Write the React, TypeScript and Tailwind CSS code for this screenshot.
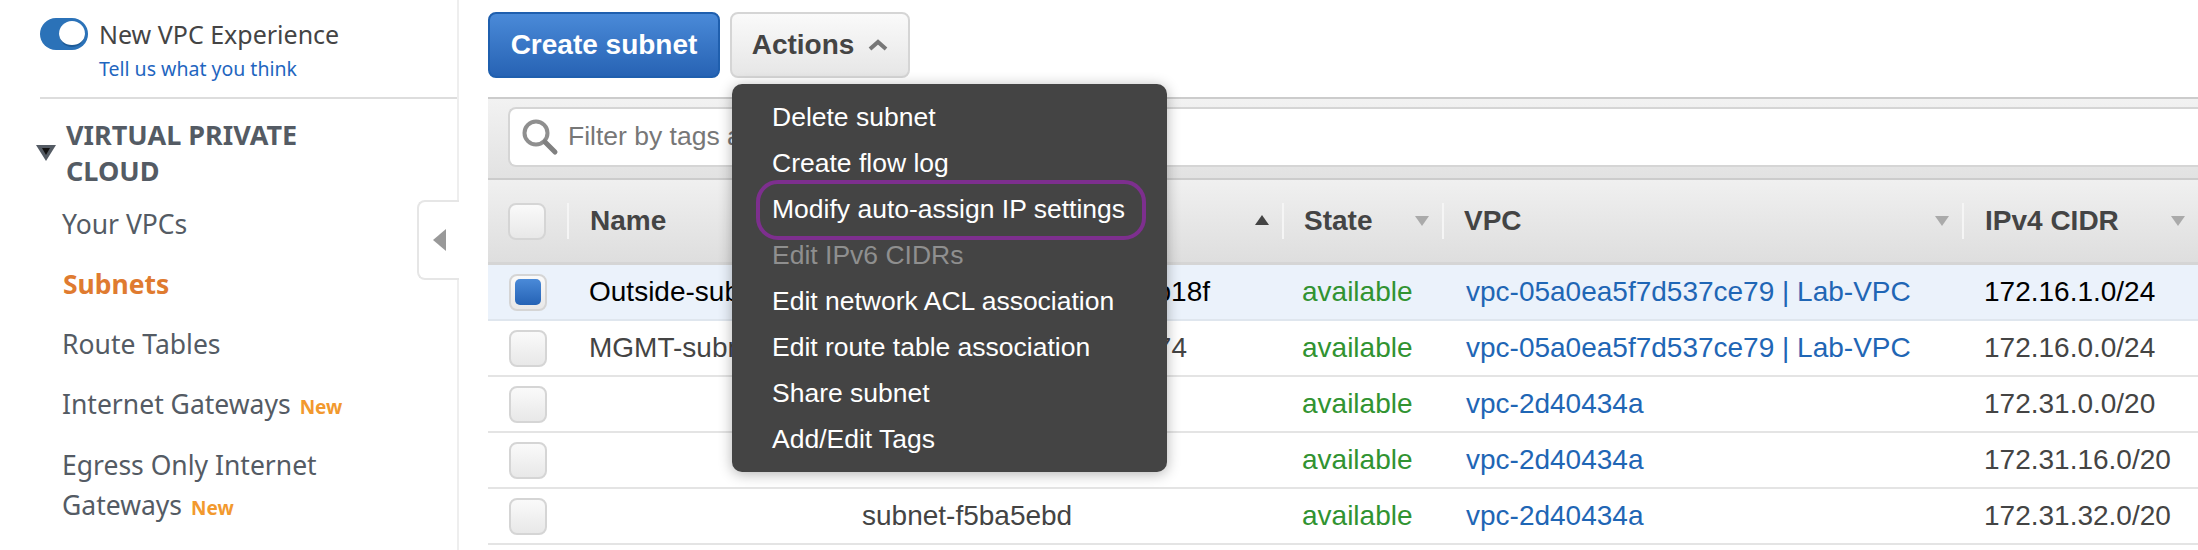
const menuItems = [
  { label: "Delete subnet" },
  { label: "Create flow log" },
  { label: "Modify auto-assign IP settings", highlighted: true },
  { label: "Edit IPv6 CIDRs", disabled: true },
  { label: "Edit network ACL association" },
  { label: "Edit route table association" },
  { label: "Share subnet" },
  { label: "Add/Edit Tags" },
];

const rows = [
  { name: "Outside-subnet", id: "b18f", idRight: true, vpc: "vpc-05a0ea5f7d537ce79 | Lab-VPC", cidr: "172.16.1.0/24", selected: true },
  { name: "MGMT-subnet", id: "74", idRight: true, vpc: "vpc-05a0ea5f7d537ce79 | Lab-VPC", cidr: "172.16.0.0/24" },
  { name: "", id: "", vpc: "vpc-2d40434a", cidr: "172.31.0.0/20" },
  { name: "", id: "", vpc: "vpc-2d40434a", cidr: "172.31.16.0/20" },
  { name: "", id: "subnet-f5ba5ebd", vpc: "vpc-2d40434a", cidr: "172.31.32.0/20" },
];

function NewBadge() {
  return <span className="ml-[9px] text-[19px] font-bold text-[#f2992e]">New</span>;
}

function Sidebar() {
  return (
    <aside className="relative h-full w-[459px] shrink-0 border-r-2 border-[#eeeeee] pl-[40px] font-['Noto_Sans',sans-serif]">
      <div className="h-[99px] border-b-2 border-[#dddddd] pt-[18px]">
        <div className="flex items-center gap-[11px]">
          <div className="flex h-[32px] w-[48px] items-center justify-end rounded-full bg-[#2b72b8] pr-[3px]">
            <div className="h-[26px] w-[26px] rounded-full border-b-2 border-[#1d5a96] bg-white" />
          </div>
          <span className="text-[25px] leading-[30px] text-[#444444]">New VPC Experience</span>
        </div>
        <a className="mt-[8px] block pl-[59px] text-[19.5px] leading-[22px] text-[#1f66bf]">Tell us what you think</a>
      </div>

      <div className="mt-[18px] flex items-center">
        <svg width="20" height="16" viewBox="0 0 20 16" className="-ml-[4px] mr-[10px] shrink-0">
          <path d="M0 0H20L10 16Z" fill="#545b64" />
          <path d="M6 3H14L10 10Z" fill="#111111" />
        </svg>
        <h2 className="w-[280px] text-[27px] font-bold leading-[36px] text-[#545b64]">VIRTUAL PRIVATE CLOUD</h2>
      </div>

      <nav className="mt-[13px] pl-[22px] text-[26.5px] text-[#545b64]">
        <a className="block h-[60px] leading-[44px]">Your VPCs</a>
        <a className="block h-[60px] pl-[1px] font-bold leading-[44px] text-[#df7b30]">Subnets</a>
        <a className="block h-[60px] leading-[44px]">Route Tables</a>
        <a className="block h-[63px] leading-[44px]">Internet Gateways<NewBadge /></a>
        <a className="block w-[340px] leading-[40px]">Egress Only Internet Gateways<NewBadge /></a>
      </nav>

      <div className="absolute right-[-2px] top-[200px] flex h-[80px] w-[42px] items-center rounded-l-[8px] border-2 border-r-0 border-[#e6e6e6] bg-white pl-[14px]">
        <svg width="13" height="22" viewBox="0 0 13 22"><path d="M13 0V22L0 11Z" fill="#999999" /></svg>
      </div>
    </aside>
  );
}

function Checkbox({ checked }: { checked?: boolean }) {
  return (
    <div className="flex h-[37px] w-[38px] items-center justify-center rounded-[8px] border-2 border-[#d5d5d5] bg-gradient-to-b from-[#fafafa] to-[#e8e8e8]">
      {checked && <div className="h-[26px] w-[26px] rounded-[5px] bg-gradient-to-b from-[#4a8ad8] to-[#2563b5]" />}
    </div>
  );
}

function SortArrow({ up, className }: { up?: boolean; className: string }) {
  return (
    <svg width="14" height="10" viewBox="0 0 14 10" className={className}>
      <path d={up ? "M7 0L14 10H0Z" : "M0 0H14L7 10Z"} fill={up ? "#444444" : "#aaaaaa"} />
    </svg>
  );
}

function HeaderCell({ label, className }: { label: string; className: string }) {
  return (
    <div className={`relative flex h-[36px] items-center text-[28px] font-bold text-[#444444] ${className}`}>
      {label}
      <SortArrow className="absolute right-[13px] top-[13px]" />
    </div>
  );
}

function ActionsMenu() {
  return (
    <div className="absolute left-[273px] top-[84px] z-10 w-[435px] rounded-[10px] bg-[#444444] py-[10px] shadow-[0_2px_14px_rgba(0,0,0,0.3)]">
      {menuItems.map((item) => (
        <div
          key={item.label}
          className={`relative h-[46px] pl-[40px] text-[26.5px] leading-[46px] ${item.disabled ? "text-[#8f8f8f]" : "text-white"}`}
        >
          {item.label}
          {item.highlighted && (
            <div className="absolute left-[24px] right-[21px] top-[-6px] h-[60px] rounded-[22px] border-4 border-[#7d2f8e]" />
          )}
        </div>
      ))}
    </div>
  );
}

export default function App() {
  return (
    <div className="flex h-[550px] w-[2198px] overflow-hidden bg-white font-['Liberation_Sans',Arial,sans-serif]">
      <Sidebar />
      <main className="relative min-w-0 flex-1 pl-[29px]">
        <div className="flex h-[97px] gap-[10px] pt-[12px]">
          <button className="h-[66px] w-[232px] rounded-[8px] border-2 border-[#1f5fae] bg-gradient-to-b from-[#4a8ad8] to-[#2763b4] text-[28px] font-bold text-white">
            Create subnet
          </button>
          <button className="flex h-[66px] w-[180px] items-center justify-center gap-[14px] rounded-[8px] border-2 border-[#d5d5d5] bg-gradient-to-b from-[#fafafa] to-[#e6e6e6] text-[28px] font-bold text-[#444444]">
            Actions
            <svg width="20" height="12" viewBox="0 0 20 12"><path d="M2 10L10 3L18 10" fill="none" stroke="#777777" strokeWidth="4" /></svg>
          </button>
        </div>

        <ActionsMenu />

        <div className="flex h-[83px] items-start border-y-2 border-[#cccccc] bg-gradient-to-b from-[#f2f2f2] to-[#e2e2e2] pl-[20px] pt-[8px]">
          <div className="flex h-[60px] flex-1 items-center rounded-l-[8px] border-2 border-r-0 border-[#d5d5d5] bg-white pl-[11px]">
            <svg width="38" height="38" viewBox="0 0 38 38" className="shrink-0">
              <circle cx="15" cy="15" r="11.5" fill="none" stroke="#8f8f8f" strokeWidth="4" />
              <path d="M24 24L34 34" stroke="#808080" strokeWidth="5" strokeLinecap="round" />
            </svg>
            <span className="ml-[9px] text-[26.5px] text-[#777777]">Filter by tags and attributes</span>
          </div>
        </div>

        <div className="flex h-[85px] items-center border-b-[3px] border-[#d5d5d5] bg-gradient-to-b from-[#f0f0f0] to-[#dedede]">
          <div className="flex w-[79px] shrink-0 justify-start pl-[20px]"><Checkbox /></div>
          <div className="flex h-[36px] w-[274px] shrink-0 items-center border-l-2 border-[#f5f5f5] pl-[21px] text-[28px] font-bold text-[#444444]">Name</div>
          <div className="relative h-[36px] w-[441px] shrink-0">
            <SortArrow up className="absolute right-[13px] top-[12px]" />
          </div>
          <HeaderCell label="State" className="w-[160px] shrink-0 border-l-2 border-[#f5f5f5] pl-[20px]" />
          <HeaderCell label="VPC" className="w-[520px] shrink-0 border-l-2 border-[#f5f5f5] pl-[20px]" />
          <HeaderCell label="IPv4 CIDR" className="flex-1 border-l-2 border-[#f5f5f5] pl-[21px]" />
        </div>

        {rows.map((row) => (
          <div
            key={row.cidr}
            className={`flex h-[56px] items-center border-b-2 text-[28px] ${row.selected ? "border-[#dfe6ee] bg-[#ebf2fb] text-black" : "border-[#e4e4e4] text-[#444444]"}`}
          >
            <div className="w-[79px] shrink-0 pl-[21px]"><Checkbox checked={row.selected} /></div>
            <div className="w-[274px] shrink-0 whitespace-nowrap pl-[22px]">{row.name}</div>
            <div className={`w-[441px] shrink-0 pl-[21px] ${row.idRight ? (row.selected ? "pr-[72px] text-right" : "pr-[95px] text-right") : ""}`}>{row.id}</div>
            <div className="w-[160px] shrink-0 pl-[20px] text-[#319331]">available</div>
            <div className="w-[520px] shrink-0 pl-[24px] text-[#1f66b5]">{row.vpc}</div>
            <div className={`flex-1 pl-[22px] ${row.selected ? "text-black" : ""}`}>{row.cidr}</div>
          </div>
        ))}
      </main>
    </div>
  );
}
